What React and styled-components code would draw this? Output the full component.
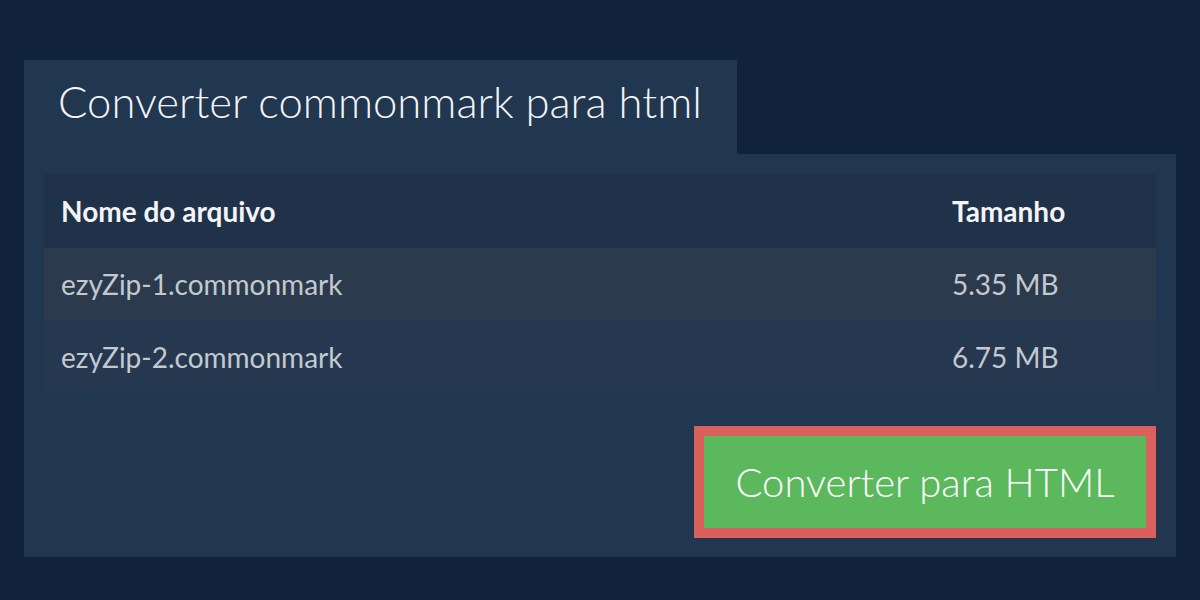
import React from "react";
import styled, { createGlobalStyle } from "styled-components";

const GlobalStyle = createGlobalStyle`
  body {
    margin: 0;
    background: #10233a;
    font-family: Lato, "Open Sans", sans-serif;
  }
`;

const Page = styled.div`
  height: 600px;
  padding: 60px 24px 0;
  box-sizing: border-box;
`;

const Tab = styled.div`
  display: inline-block;
  width: 713px;
  height: 94px;
  box-sizing: border-box;
  padding: 17px 0 0 34px;
  background: #21364f;
  color: #f2f4f6;
  font-size: 43.6px;
  font-weight: 300;
  line-height: 48px;
  vertical-align: top;
`;

const Panel = styled.div`
  background: #21364f;
  padding: 20px 20px 19px;
  display: flex;
  flex-direction: column;
`;

const Table = styled.table`
  width: 100%;
  border-collapse: collapse;
  font-size: 28px;
`;

const HeadCell = styled.th`
  background: #1f3249;
  color: #f3f4f6;
  font-weight: 700;
  text-align: left;
  height: 74px;
  padding: 0 17px;
  width: ${(p) => p.width || "auto"};
`;

const Row = styled.tr`
  background: ${(p) => (p.odd ? "#2b3b4d" : "#253850")};
`;

const Cell = styled.td`
  color: #c4c9d0;
  height: 71px;
  padding: 0 17px 2px;
`;

const Actions = styled.div`
  display: flex;
  justify-content: flex-end;
  margin-top: 32px;
`;

const Button = styled.button`
  width: 462px;
  height: 112px;
  box-sizing: border-box;
  border: 10px solid #d9605c;
  background: #5cb85c;
  color: #ffffff;
  font-family: Lato, "Open Sans", sans-serif;
  font-size: 40px;
  font-weight: 300;
  cursor: pointer;
`;

const files = [
  { name: "ezyZip-1.commonmark", size: "5.35 MB" },
  { name: "ezyZip-2.commonmark", size: "6.75 MB" },
];

export default function App() {
  return (
    <>
      <GlobalStyle />
      <Page>
        <Tab>Converter commonmark para html</Tab>
        <Panel>
          <Table>
            <thead>
              <tr>
                <HeadCell>Nome do arquivo</HeadCell>
                <HeadCell width="187px">Tamanho</HeadCell>
              </tr>
            </thead>
            <tbody>
              {files.map((f, i) => (
                <Row key={f.name} odd={i % 2 === 0}>
                  <Cell>{f.name}</Cell>
                  <Cell>{f.size}</Cell>
                </Row>
              ))}
            </tbody>
          </Table>
          <Actions>
            <Button>Converter para HTML</Button>
          </Actions>
        </Panel>
      </Page>
    </>
  );
}
